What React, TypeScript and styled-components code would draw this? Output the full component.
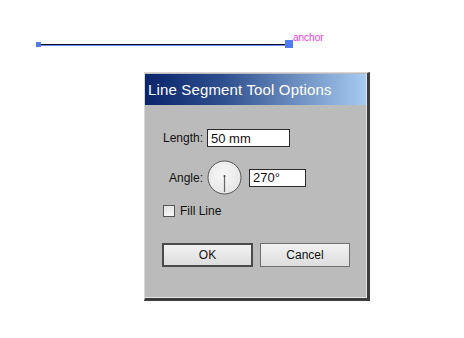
import React from 'react'
import styled, { createGlobalStyle } from 'styled-components'

const GlobalStyle = createGlobalStyle`
  html, body {
    margin: 0;
    padding: 0;
    background: #fff;
  }
`

const Canvas = styled.div`
  position: relative;
  width: 464px;
  height: 338px;
  overflow: hidden;
  background: #fff;
  font-family: 'Liberation Sans', Arial, sans-serif;
`

const Segment = styled.div`
  position: absolute;
  left: 36px;
  top: 40px;
  display: flex;
  align-items: center;
  height: 8px;
`

const Handle = styled.div<{ size: number }>`
  width: ${(p) => p.size}px;
  height: ${(p) => p.size}px;
  background: #4f7cf2;
  flex: none;
`

const Stroke = styled.div`
  width: 244px;
  height: 1px;
  background: #0c0c24;
  border-bottom: 1px solid #6f8ff0;
  margin-top: 1px;
`

const AnchorLabel = styled.span`
  position: absolute;
  left: 257px;
  top: -8px;
  font-size: 10px;
  color: #e63ee6;
  white-space: nowrap;
`

const Window = styled.div`
  position: absolute;
  left: 144px;
  top: 72px;
  width: 222px;
  height: 225px;
  background: #bbbbbb;
  border-left: 1px solid #d6d6d6;
  border-top: 1px solid #d6d6d6;
  border-right: 3px solid #3c3c3c;
  border-bottom: 3px solid #3c3c3c;
  box-shadow: inset -1px -1px 0 #e2e2e2;
  display: flex;
  flex-direction: column;
`

const TitleBar = styled.div`
  height: 31px;
  margin: 1px 1px 0 0;
  padding-left: 3px;
  display: flex;
  align-items: center;
  background: linear-gradient(to right, #0a246a 0%, #2e4f8e 35%, #a6caf0 100%);
  color: #fff;
  font-size: 15px;
  letter-spacing: 0.15px;
  white-space: nowrap;
`

const Body = styled.div`
  padding: 24px 0 0 17px;
  display: flex;
  flex-direction: column;
  font-size: 12px;
  color: #111;
`

const FieldRow = styled.div<{ mt?: number }>`
  display: flex;
  align-items: center;
  gap: 4px;
  margin-top: ${(p) => p.mt ?? 0}px;
`

const FieldLabel = styled.label`
  width: 41px;
  text-align: right;
  flex: none;
`

const TextBox = styled.div<{ w: number; ml?: number }>`
  width: ${(p) => p.w}px;
  height: 18px;
  box-sizing: border-box;
  margin-left: ${(p) => p.ml ?? 0}px;
  border: 1px solid #2a2a2a;
  background: #fff;
  padding-left: 3px;
  display: flex;
  align-items: center;
  font-size: 13px;
`

const Dial = styled.svg`
  display: block;
  flex: none;
`

const CheckRow = styled.label`
  display: flex;
  align-items: center;
  gap: 5px;
  margin: 9px 0 0 1px;
`

const CheckBox = styled.span`
  width: 12px;
  height: 12px;
  box-sizing: border-box;
  border: 1px solid #555;
  background: linear-gradient(#e4e4e4, #f6f6f6);
`

const ButtonRow = styled.div`
  display: flex;
  gap: 7px;
  margin-top: 25px;
`

const DialogButton = styled.button<{ primary?: boolean }>`
  width: ${(p) => (p.primary ? 91 : 90)}px;
  height: 24px;
  box-sizing: border-box;
  border: ${(p) => (p.primary ? '2px solid #4a4a4a' : '1px solid #6e6e6e')};
  background: linear-gradient(#f2f2f2, #dddddd);
  font-family: 'Liberation Sans', Arial, sans-serif;
  font-size: 12px;
  color: #111;
  padding: 0;
`

export default function App() {
  return (
    <Canvas>
      <GlobalStyle />
      <Segment>
        <Handle size={5} />
        <Stroke />
        <Handle size={8} />
        <AnchorLabel>anchor</AnchorLabel>
      </Segment>
      <Window>
        <TitleBar>Line Segment Tool Options</TitleBar>
        <Body>
          <FieldRow>
            <FieldLabel>Length:</FieldLabel>
            <TextBox w={83}>50 mm</TextBox>
          </FieldRow>
          <FieldRow mt={13}>
            <FieldLabel>Angle:</FieldLabel>
            <Dial width="35" height="35" viewBox="0 0 35 35">
              <defs>
                <radialGradient id="dialFill" cx="0.45" cy="0.4" r="0.6">
                  <stop offset="0" stopColor="#f7f7f7" />
                  <stop offset="1" stopColor="#e6e6e6" />
                </radialGradient>
              </defs>
              <circle cx="17.5" cy="17.5" r="16.5" fill="url(#dialFill)" stroke="#555" strokeWidth="1" />
              <line x1="17.5" y1="16" x2="17.5" y2="32" stroke="#666" strokeWidth="1.2" />
              <circle cx="17.5" cy="16" r="1" fill="#444" />
            </Dial>
            <TextBox w={57} ml={3}>270°</TextBox>
          </FieldRow>
          <CheckRow>
            <CheckBox />
            Fill Line
          </CheckRow>
          <ButtonRow>
            <DialogButton primary>OK</DialogButton>
            <DialogButton>Cancel</DialogButton>
          </ButtonRow>
        </Body>
      </Window>
    </Canvas>
  )
}
